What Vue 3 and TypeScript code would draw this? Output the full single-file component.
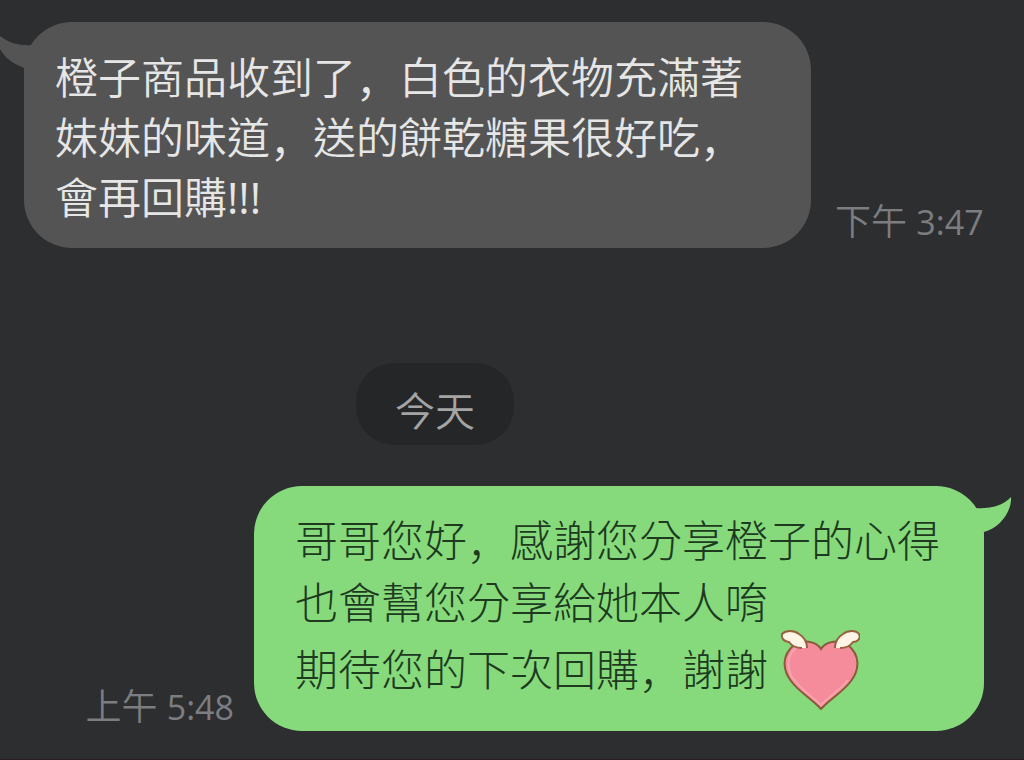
<script setup lang="ts">
interface Part {
  text: string
  kind: 'han' | 'comma' | 'latin'
}

interface Line {
  parts: Part[]
  heart: boolean
}

const kindOf = (text: string): Part['kind'] => {
  if (text === '，') return 'comma'
  return text.startsWith('!') ? 'latin' : 'han'
}

// Punctuation is kept in separate parts so it can take its own glyph style.
const toLine = (text: string, heart = false): Line => ({
  parts: text
    .split(/(，|!+)/)
    .filter(Boolean)
    .map((part) => ({ text: part, kind: kindOf(part) })),
  heart,
})

const received: Line[] = [
  toLine('橙子商品收到了，白色的衣物充滿著'),
  toLine('妹妹的味道，送的餅乾糖果很好吃，'),
  toLine('會再回購!!!'),
]

const sent: Line[] = [
  toLine('哥哥您好，感謝您分享橙子的心得'),
  toLine('也會幫您分享給她本人唷'),
  toLine('期待您的下次回購，謝謝', true),
]
</script>

<template>
  <main class="chat">
    <article class="row received">
      <div class="bubble">
        <svg class="tail" viewBox="0 0 40 40" aria-hidden="true">
          <path d="M0 2C10 10 22 12 32 11L40 8V40L24 34C12 29 5 24 0 15Z" />
        </svg>
        <p v-for="(line, i) in received" :key="i" class="line">
          <span v-for="(part, j) in line.parts" :key="j" :class="part.kind">{{ part.text }}</span>
        </p>
      </div>
      <time class="time" datetime="15:47">下午 <span class="clock">3:47</span></time>
    </article>

    <div class="day"><span>今天</span></div>

    <article class="row sent">
      <time class="time" datetime="05:48">上午 <span class="clock">5:48</span></time>
      <div class="bubble">
        <svg class="tail" viewBox="0 0 40 40" aria-hidden="true">
          <path d="M0 14L3 11C18 12 31 9 39 0C40 14 28 31 12 35L0 36Z" />
        </svg>
        <p v-for="(line, i) in sent" :key="i" class="line" :class="{ tall: line.heart }">
          <span v-for="(part, j) in line.parts" :key="j" :class="part.kind">{{ part.text }}</span>
          <svg v-if="line.heart" class="heart" viewBox="0 0 80 80" role="img" aria-label="heart with wings">
            <path class="body" d="M41 19C46 11 60 9 68 15C80 25 80 39 71 51C63 62 50 69 41 79C32 69 19 62 11 51C2 39 2 25 14 15C22 9 36 11 41 19Z" />
            <path class="shine" d="M16 18C8 24 6 36 12 47C19 58 31 66 41 75C50 66 61 59 68 50" />
            <path class="wing" d="M22 18C16 18 11 15 9 12C4 12 1 8 2 4C6 0 14 0 19 4C24 7 27 12 27 18" />
            <path class="wing" d="M60 18C66 18 71 15 73 12C78 12 81 8 79 4C76 0 68 0 63 4C58 7 55 12 55 18" />
          </svg>
        </p>
      </div>
    </article>
  </main>
</template>

<style>
html,
body {
  margin: 0;
  background: #2d2e30;
}
</style>

<style scoped>
.chat {
  box-sizing: border-box;
  min-height: 100vh;
  padding: 22px 40px 28px 24px;
  overflow: hidden;
  background: #2d2e30;
  border-bottom: 1px solid #2b1d22;
  font-family: "Open Sans", "Noto Sans CJK TC", sans-serif;
  font-weight: 350;
}

.row {
  display: flex;
  align-items: flex-end;
}

.bubble {
  position: relative;
  box-sizing: border-box;
  border-radius: 48px;
  font-size: 43px;
}

.line {
  margin: 0;
  display: flex;
  align-items: center;
  white-space: nowrap;
}

.comma {
  font-family: "Noto Sans CJK SC", sans-serif;
}

.latin {
  font-weight: 400;
}

.time {
  flex: none;
  color: #7c7d80;
  font-size: 36px;
  line-height: 48px;
  white-space: nowrap;
}

.clock {
  font-size: 34px;
  font-weight: 400;
}

.received {
  gap: 24px;
}

.received .bubble {
  flex: 0 1 787px;
  padding: 26px 31px 20px;
  background: #545454;
  color: #e6e6e6;
}

.received .line {
  height: 60px;
  line-height: 60px;
}

.received .time {
  padding-bottom: 2px;
}

.sent {
  justify-content: flex-end;
  gap: 20px;
}

.sent .bubble {
  flex: 0 1 730px;
  padding: 24px 41px 25px;
  background: #86da7c;
  color: #1d3a1f;
  font-weight: 300;
}

.sent .line {
  height: 62px;
  line-height: 62px;
}

.sent .line.tall {
  height: 72px;
  line-height: 72px;
}

.tail {
  position: absolute;
  width: 40px;
  height: 40px;
}

.received .tail {
  top: 12px;
  left: -24px;
  fill: #545454;
}

.sent .tail {
  top: 11px;
  right: -28px;
  fill: #86da7c;
}

.day {
  display: flex;
  justify-content: center;
  margin: 115px 138px 41px 0;
}

.day span {
  padding: 20px 39px 6px;
  border-radius: 38px;
  background: #252627;
  color: #a4a4a5;
  font-size: 40px;
  line-height: 56px;
}

.heart {
  flex: none;
  width: 80px;
  height: 80px;
  margin-left: 12px;
}

.body {
  fill: #f58c9b;
  stroke: #8a5a3c;
  stroke-width: 2;
}

.shine {
  fill: none;
  stroke: #f9a5ad;
  stroke-width: 2;
}

.wing {
  fill: #fff5e6;
  stroke: #96623f;
  stroke-width: 2;
}
</style>
